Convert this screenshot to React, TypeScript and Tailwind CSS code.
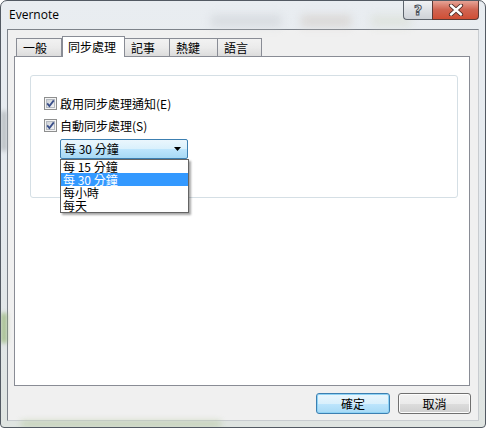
import React from 'react';

const FONT = { fontFamily: '"Noto Sans CJK TC", "Liberation Sans", sans-serif' };

const tabs = [
  { label: '一般', w: 'w-[46px]' },
  { label: '同步處理', w: 'w-[63px]', active: true },
  { label: '記事', w: 'w-[46px]' },
  { label: '熱鍵', w: 'w-[49px]' },
  { label: '語言', w: 'w-[45px]' },
];

const options = ['每 15 分鐘', '每 30 分鐘', '每小時', '每天'];

const CheckBox = () => (
  <svg width="13" height="13" viewBox="0 0 13 13" className="shrink-0">
    <defs>
      <linearGradient id="cbfill" x1="0" y1="0" x2="1" y2="1">
        <stop offset="0" stopColor="#cbcfd5" />
        <stop offset="1" stopColor="#f6f6f6" />
      </linearGradient>
    </defs>
    <rect x="0.5" y="0.5" width="12" height="12" fill="#f4f4f4" stroke="#8e8f8f" />
    <rect x="2.5" y="2.5" width="8" height="8" fill="url(#cbfill)" stroke="#b4b9c0" strokeWidth="1" />
    <path d="M3.2 6.4 L5.4 9 L9.8 3.4" fill="none" stroke="#3a4f8a" strokeWidth="1.8" />
  </svg>
);

const Check = ({ label, hot }: { label: string; hot: string }) => (
  <div className="flex items-center gap-[3px] h-[13px]">
    <CheckBox />
    <span className="text-[12px] leading-[13px] text-black" style={FONT}>
      {label}({hot})
    </span>
  </div>
);

export default function App() {
  return (
    <div
      className="relative w-[486px] h-[428px] rounded-t-[7px] rounded-b-[4px] border border-[#535a63] bg-gradient-to-b from-[#e9edf1] via-[#e4e9ee] to-[#dfe4e1] flex flex-col overflow-hidden"
      style={FONT}
    >
      {/* faint glass reflections */}
      <div className="absolute left-[210px] top-[14px] w-[70px] h-[12px] bg-[#c9cdd2] blur-[4px] opacity-50" />
      <div className="absolute left-[300px] top-[14px] w-[50px] h-[12px] bg-[#cfc6bf] blur-[4px] opacity-50" />
      <div className="absolute left-[370px] top-[14px] w-[40px] h-[12px] bg-[#d3d8c6] blur-[4px] opacity-40" />
      <div className="absolute left-0 top-[110px] w-[6px] h-[40px] bg-[#a8adb1] blur-[2px] opacity-70" />
      <div className="absolute left-0 top-[312px] w-[6px] h-[30px] bg-[#8fb06b] blur-[2px] opacity-70" />
      <div className="absolute left-[20px] bottom-0 w-[200px] h-[6px] bg-[#b3c79a] blur-[3px] opacity-60" />

      {/* title bar */}
      <div className="relative h-[28px] shrink-0 flex items-start justify-between pl-[8px] pr-[6px]">
        <span className="mt-[6px] text-[12px] leading-[16px] text-black" style={{ fontFamily: '"Open Sans", "Liberation Sans", sans-serif' }}>
          Evernote
        </span>
        <div className="flex -mt-px">
          <div className="w-[29px] h-[20px] rounded-bl-[4px] border border-[#5d646c] border-t-0 border-r-0 bg-gradient-to-b from-[#f3f4f6] via-[#dfe2e6] to-[#cfd3d8] flex items-center justify-center">
            <span className="text-[14px] leading-none font-bold text-[#eef0f2]" style={{ fontFamily: '"DejaVu Sans", sans-serif', WebkitTextStroke: '1px #4b525a' }}>
              ?
            </span>
          </div>
          <div className="w-[47px] h-[20px] rounded-br-[4px] border border-[#5d3b36] border-t-0 bg-gradient-to-b from-[#e8aa9e] via-[#d06552] to-[#d04e34] flex items-center justify-center">
            <svg width="16" height="12" viewBox="0 0 16 12">
              <path d="M3 1.5 L13 10.5 M13 1.5 L3 10.5" fill="none" stroke="#4a2a25" strokeWidth="4.2" strokeLinecap="round" />
              <path d="M3 1.5 L13 10.5 M13 1.5 L3 10.5" fill="none" stroke="#ffffff" strokeWidth="2.4" strokeLinecap="round" />
            </svg>
          </div>
        </div>
      </div>

      {/* client area */}
      <div className="flex-1 mx-[6px] mb-[6px] bg-[#f0f0f0] border border-[#7c828a] border-b-[#c8ccd0] border-r-[#c8ccd0] flex flex-col pt-[6px] pl-[6px] pr-[8px]">
        {/* tab strip */}
        <div className="flex items-end h-[20px] pl-[2px] relative z-10">
          {tabs.map((t) =>
            t.active ? (
              <div
                key={t.label}
                className={`${t.w} h-[21px] -mb-px bg-white border border-[#898c95] border-b-0 flex items-center pl-[5px] text-[12px] text-black`}
              >
                {t.label}
              </div>
            ) : (
              <div
                key={t.label}
                className={`${t.w} h-[18px] bg-gradient-to-b from-[#f2f2f2] via-[#ebebeb] to-[#dcdcdc] border border-[#898c95] border-b-0 -ml-px first:ml-0 flex items-center pl-[6px] text-[12px] text-black`}
              >
                {t.label}
              </div>
            )
          )}
        </div>

        {/* tab page */}
        <div className="flex-1 bg-white border border-[#898c95] pt-[18px] pl-[15px] pr-[11px]">
          <div className="relative h-[123px] rounded-[3px] border border-[#d5dfe5] pt-[21px] pl-[13px] flex flex-col">
            <div className="flex flex-col gap-[9px]">
              <Check label="啟用同步處理通知" hot="E" />
              <Check label="自動同步處理" hot="S" />
            </div>

            <div className="relative ml-[16px] mt-[7px] w-[128px]">
              <div className="h-[20px] rounded-[2px] border border-[#3c7fb1] bg-[linear-gradient(to_bottom,#eaf6fd_0%,#d9f0fc_50%,#bee6fd_50%,#a7d9f5_100%)] flex items-center justify-between pl-[3px] pr-[6px]">
                <span className="text-[12px] leading-none text-black">每 30 分鐘</span>
                <svg width="7" height="4" viewBox="0 0 7 4">
                  <path d="M0 0 H7 L3.5 4 Z" fill="#000" />
                </svg>
              </div>

              {/* dropdown list */}
              <div className="absolute left-0 top-[20px] w-[129px] bg-white border border-[#646464] shadow-[2px_2px_2px_rgba(0,0,0,0.35)] flex flex-col">
                {options.map((o, i) => (
                  <div
                    key={o}
                    className={`h-[13px] pl-[2px] text-[12px] leading-[13px] ${i === 1 ? 'bg-[#3399ff] text-white' : 'text-black'}`}
                  >
                    {o}
                  </div>
                ))}
              </div>
            </div>
          </div>
        </div>

        {/* buttons */}
        <div className="flex justify-end gap-[8px] mt-[7px] mb-[6px] mr-[-1px]">
          <button className="w-[74px] h-[21px] rounded-[3px] border border-[#3c7fb1] bg-[linear-gradient(to_bottom,#eaf6fd_0%,#d9f0fc_50%,#bee6fd_50%,#a7d9f5_100%)] shadow-[0_0_0_1px_#8fd3f5_inset] text-[12px] leading-none text-black">
            確定
          </button>
          <button className="w-[73px] h-[21px] rounded-[3px] border border-[#707070] bg-[linear-gradient(to_bottom,#f2f2f2_0%,#ebebeb_50%,#dddddd_50%,#cfcfcf_100%)] shadow-[0_0_0_1px_#fcfcfc_inset] text-[12px] leading-none text-black">
            取消
          </button>
        </div>
      </div>
    </div>
  );
}
